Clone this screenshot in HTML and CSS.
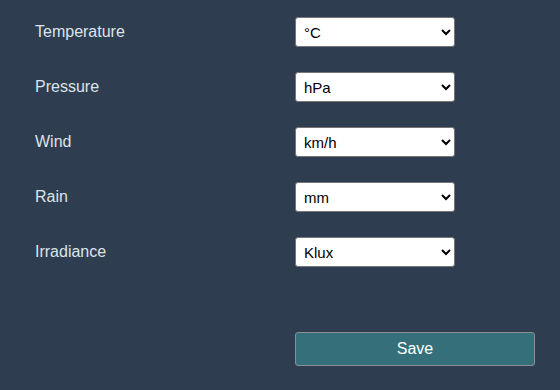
FILE: index.html
```html
<!DOCTYPE html>
<html lang="en">
<head>
    <meta charset="UTF-8">
    <meta name="viewport" content="width=device-width, initial-scale=1.0">
    <title>Units</title>
    <link rel="stylesheet" href="styles.css">
</head>
<body>
    <div class="settings">
        <div class="form-row">
            <label for="temperature">Temperature</label>
            <select id="temperature">
                <option value="C">°C</option>
                <option value="F">°F</option>
            </select>
        </div>
        <div class="form-row">
            <label for="pressure">Pressure</label>
            <select id="pressure">
                <option value="hPa">hPa</option>
                <option value="inHg">inHg</option>
            </select>
        </div>
        <div class="form-row">
            <label for="wind">Wind</label>
            <select id="wind">
                <option value="kmh">km/h</option>
                <option value="ms">m/s</option>
                <option value="mph">mph</option>
            </select>
        </div>
        <div class="form-row">
            <label for="rain">Rain</label>
            <select id="rain">
                <option value="mm">mm</option>
                <option value="in">in</option>
            </select>
        </div>
        <div class="form-row">
            <label for="irradiance">Irradiance</label>
            <select id="irradiance">
                <option value="klux">Klux</option>
                <option value="wm2">W/m²</option>
            </select>
        </div>
        <div class="form-actions">
            <button class="btn">Save</button>
        </div>
    </div>
</body>
</html>
```

FILE: styles.css
```css
body {
    font-family: 'Liberation Sans', Arial, sans-serif;
    background-color: #2e3e50;
    color: #dde3ea;
    margin: 0;
    padding: 0;
}

.settings {
    padding: 17px 0 0 35px;
}

.form-row {
    display: grid;
    grid-template-columns: 260px 160px;
    align-items: center;
    margin-bottom: 25px;
}

.form-row label {
    font-size: 16px;
}

.form-row select {
    width: 160px;
    height: 30px;
    padding: 0 4px;
    font-family: 'Liberation Sans', Arial, sans-serif;
    font-size: 15px;
    color: #000;
    background-color: #fff;
    border: 1px solid #767676;
    border-radius: 3px;
}

.form-actions {
    padding: 40px 0 0 260px;
}

.btn {
    width: 240px;
    height: 34px;
    background-color: #356f79;
    color: #fff;
    border: 1px solid #8a8f94;
    border-radius: 3px;
    font-family: 'Liberation Sans', Arial, sans-serif;
    font-size: 16px;
    cursor: pointer;
}

.btn:hover {
    background-color: #2c5f68;
}
```
